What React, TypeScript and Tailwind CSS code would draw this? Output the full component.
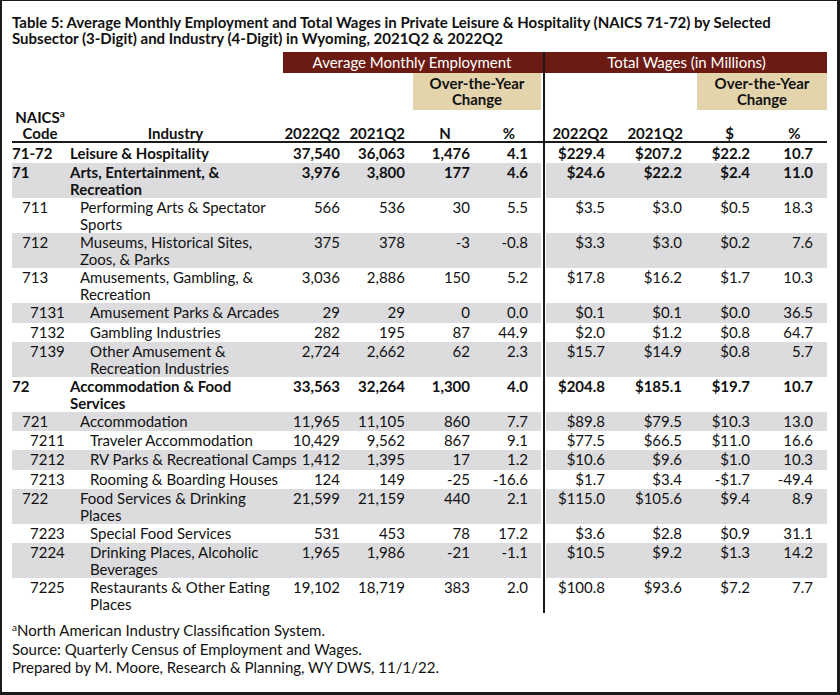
const cols =
  'grid grid-cols-[56px_215px_62px_68px_64px_64px_5px_75px_76px_65px_65px]';

type Row = {
  code: string;
  name: string[];
  level: number;
  v: string[];
};

const rows: Row[] = [
  { code: '71-72', name: ['Leisure & Hospitality'], level: 0, v: ['37,540', '36,063', '1,476', '4.1', '$229.4', '$207.2', '$22.2', '10.7'] },
  { code: '71', name: ['Arts, Entertainment, &', 'Recreation'], level: 0, v: ['3,976', '3,800', '177', '4.6', '$24.6', '$22.2', '$2.4', '11.0'] },
  { code: '711', name: ['Performing Arts & Spectator', 'Sports'], level: 1, v: ['566', '536', '30', '5.5', '$3.5', '$3.0', '$0.5', '18.3'] },
  { code: '712', name: ['Museums, Historical Sites,', 'Zoos, & Parks'], level: 1, v: ['375', '378', '-3', '-0.8', '$3.3', '$3.0', '$0.2', '7.6'] },
  { code: '713', name: ['Amusements, Gambling, &', 'Recreation'], level: 1, v: ['3,036', '2,886', '150', '5.2', '$17.8', '$16.2', '$1.7', '10.3'] },
  { code: '7131', name: ['Amusement Parks & Arcades'], level: 2, v: ['29', '29', '0', '0.0', '$0.1', '$0.1', '$0.0', '36.5'] },
  { code: '7132', name: ['Gambling Industries'], level: 2, v: ['282', '195', '87', '44.9', '$2.0', '$1.2', '$0.8', '64.7'] },
  { code: '7139', name: ['Other Amusement &', 'Recreation Industries'], level: 2, v: ['2,724', '2,662', '62', '2.3', '$15.7', '$14.9', '$0.8', '5.7'] },
  { code: '72', name: ['Accommodation & Food', 'Services'], level: 0, v: ['33,563', '32,264', '1,300', '4.0', '$204.8', '$185.1', '$19.7', '10.7'] },
  { code: '721', name: ['Accommodation'], level: 1, v: ['11,965', '11,105', '860', '7.7', '$89.8', '$79.5', '$10.3', '13.0'] },
  { code: '7211', name: ['Traveler Accommodation'], level: 2, v: ['10,429', '9,562', '867', '9.1', '$77.5', '$66.5', '$11.0', '16.6'] },
  { code: '7212', name: ['RV Parks & Recreational Camps'], level: 2, v: ['1,412', '1,395', '17', '1.2', '$10.6', '$9.6', '$1.0', '10.3'] },
  { code: '7213', name: ['Rooming & Boarding Houses'], level: 2, v: ['124', '149', '-25', '-16.6', '$1.7', '$3.4', '-$1.7', '-49.4'] },
  { code: '722', name: ['Food Services & Drinking', 'Places'], level: 1, v: ['21,599', '21,159', '440', '2.1', '$115.0', '$105.6', '$9.4', '8.9'] },
  { code: '7223', name: ['Special Food Services'], level: 2, v: ['531', '453', '78', '17.2', '$3.6', '$2.8', '$0.9', '31.1'] },
  { code: '7224', name: ['Drinking Places, Alcoholic', 'Beverages'], level: 2, v: ['1,965', '1,986', '-21', '-1.1', '$10.5', '$9.2', '$1.3', '14.2'] },
  { code: '7225', name: ['Restaurants & Other Eating', 'Places'], level: 2, v: ['19,102', '18,719', '383', '2.0', '$100.8', '$93.6', '$7.2', '7.7'] },
];

const numPad = ['pr-[5px]', 'pr-[8px]', 'pr-[7px]', 'pr-[13px]', 'pr-[16px]', 'pr-[15px]', 'pr-[12px]', 'pr-[14px]'];
const codePad = ['pl-0', 'pl-[10px]', 'pl-[18px]'];
const namePad = ['pl-[2px]', 'pl-[12px]', 'pl-[22px]'];

function Divider({ bg = 'bg-white' }: { bg?: string }) {
  return (
    <div className={`${bg} flex justify-center`}>
      <div className="w-[2px] bg-[#1a1a1a]" />
    </div>
  );
}

function DataRow({ row, grey }: { row: Row; grey: boolean }) {
  const bg = grey ? 'bg-[#dcdcdf]' : 'bg-white';
  const weight = row.level === 0 ? 'font-bold' : '';
  const height = row.name.length > 1 ? 'h-[35px]' : 'h-[19.3px]';
  const cell = `${bg} pt-[1px]`;
  return (
    <div className={`${cols} ${weight} ${height}`}>
      <div className={`${cell} ${codePad[row.level]}`}>{row.code}</div>
      <div className={`${cell} ${namePad[row.level]} whitespace-nowrap relative z-10`}>
        {row.name.map((line) => (
          <div key={line}>{line}</div>
        ))}
      </div>
      {row.v.slice(0, 4).map((x, i) => (
        <div key={i} className={`${cell} text-right ${numPad[i]}`}>{x}</div>
      ))}
      <Divider />
      {row.v.slice(4).map((x, i) => (
        <div key={i} className={`${cell} text-right ${numPad[i + 4]}`}>{x}</div>
      ))}
    </div>
  );
}

export default function App() {
  return (
    <div
      className="w-[840px] h-[695px] bg-white text-[#111] border-t border-l-2 border-r-[3px] border-b-[3px] border-[#1a1a1a] px-[10px] pt-[13px] text-[15px] leading-[17px]"
      style={{ fontFamily: 'Lato, "Noto Sans", sans-serif' }}
    >
      <h1 className="font-bold text-[15px] leading-[16px]">
        Table 5: Average Monthly Employment and Total Wages in Private Leisure &amp; Hospitality (NAICS 71-72) by Selected
        <br />
        Subsector (3-Digit) and Industry (4-Digit) in Wyoming, 2021Q2 &amp; 2022Q2
      </h1>

      <div className="mt-[6px] w-[815px]">
        <div className={`${cols} h-[21px] leading-[21px] text-white`}>
          <div className="col-span-2" />
          <div className="col-span-4 bg-[#6b1b12] text-center">Average Monthly Employment</div>
          <Divider bg="bg-[#6b1b12]" />
          <div className="col-span-4 bg-[#6b1b12] text-center">Total Wages (in Millions)</div>
        </div>

        <div className={`${cols} h-[37px] font-bold`}>
          <div className="col-span-4" />
          <div className="col-span-2 bg-[#e3d4ac] text-center pt-[2px] leading-[16px]">
            Over-the-Year
            <br />
            Change
          </div>
          <Divider />
          <div className="col-span-2" />
          <div className="col-span-2 bg-[#e3d4ac] text-center pt-[2px] leading-[16px]">
            Over-the-Year
            <br />
            Change
          </div>
        </div>

        <div className={`${cols} h-[33px] font-bold border-b-2 border-[#1a1a1a] leading-[15.5px]`}>
          <div className="text-center">
            <div>
              NAICS<span className="relative -top-[6px] text-[10px] leading-none">a</span>
            </div>
            <div>Code</div>
          </div>
          <div className="text-center self-end">Industry</div>
          <div className="text-right self-end pr-[5px]">2022Q2</div>
          <div className="text-right self-end pr-[8px]">2021Q2</div>
          <div className="text-center self-end">N</div>
          <div className="text-center self-end">%</div>
          <Divider />
          <div className="text-right self-end pr-[13px]">2022Q2</div>
          <div className="text-right self-end pr-[14px]">2021Q2</div>
          <div className="text-center self-end">$</div>
          <div className="text-center self-end">%</div>
        </div>

        <div className={`${cols} h-[1px]`}>
          <div className="col-span-6" />
          <Divider />
        </div>

        {rows.map((r, i) => (
          <DataRow key={r.code} row={r} grey={i % 2 === 1} />
        ))}
      </div>

      <div className="mt-[8px] leading-[18.5px]">
        <div>
          <span className="relative -top-[5px] text-[10px] leading-none">a</span>North American Industry Classification System.
        </div>
        <div>Source: Quarterly Census of Employment and Wages.</div>
        <div>Prepared by M. Moore, Research &amp; Planning, WY DWS, 11/1/22.</div>
      </div>
    </div>
  );
}
